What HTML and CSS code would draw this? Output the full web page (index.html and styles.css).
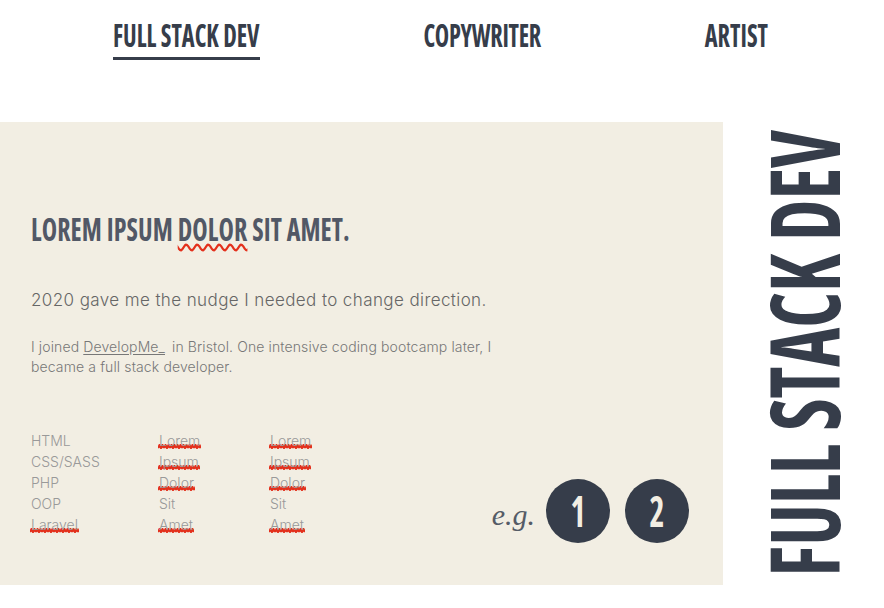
FILE: index.html
```html
<!DOCTYPE html>
<html lang="en">
<head>
<meta charset="utf-8">
<title>Full Stack Dev</title>
<link rel="stylesheet" href="styles.css">
</head>
<body>
<header class="nav">
  <a class="nav-link active" href="#"><span class="bebas">FULL STACK DEV</span></a>
  <a class="nav-link" href="#"><span class="bebas">COPYWRITER</span></a>
  <a class="nav-link" href="#"><span class="bebas">ARTIST</span></a>
</header>
<main class="layout">
  <section class="panel">
    <h1 class="title"><span class="bebas">LOREM IPSUM <span class="typo">DOLOR</span> SIT AMET.</span></h1>
    <p class="lead">2020 gave me the nudge I needed to change direction.</p>
    <p class="body">I joined <a class="link" href="#">DevelopMe_</a> in Bristol. One intensive coding bootcamp later, I became a full stack developer.</p>
    <div class="bottom">
      <div class="skills">
        <span>HTML</span><span class="typo">Lorem</span><span class="typo">Lorem</span>
        <span>CSS/SASS</span><span class="typo">Ipsum</span><span class="typo">Ipsum</span>
        <span>PHP</span><span class="typo">Dolor</span><span class="typo">Dolor</span>
        <span>OOP</span><span>Sit</span><span>Sit</span>
        <span class="typo">Laravel</span><span class="typo">Amet</span><span class="typo">Amet</span>
      </div>
      <div class="examples">
        <span class="eg">e.g.</span>
        <a class="circle" href="#"><span class="bebas">1</span></a>
        <a class="circle" href="#"><span class="bebas">2</span></a>
      </div>
    </div>
  </section>
  <aside class="side"><span class="vertical">FULL STACK DEV</span></aside>
</main>
</body>
</html>
```
FILE: styles.css
```css
* { box-sizing: border-box; }
body {
  margin: 0;
  background: #ffffff;
  font-family: "Inter", "Liberation Sans", sans-serif;
  color: #666;
}
.bebas {
  display: inline-block;
  font-family: "Open Sans", "Liberation Sans", sans-serif;
  font-stretch: 75%;
  font-weight: 700;
  transform: scaleY(1.33);
}
.nav {
  height: 122px;
  display: flex;
  justify-content: space-between;
  align-items: flex-start;
  padding: 0 116px 0 113px;
}
.nav-link {
  display: block;
  padding-top: 23px;
  padding-bottom: 10px;
  font-size: 24.3px;
  line-height: 24px;
  color: #363d4a;
  text-decoration: none;
  border-bottom: 3px solid transparent;
}
.nav-link:nth-child(2) { letter-spacing: -0.3px; }
.nav-link.active { border-bottom-color: #363d4a; }
.layout {
  display: flex;
  height: 463px;
}
.panel {
  width: 723px;
  flex: none;
  background: #f2eee3;
  padding: 0 34px 40px 31px;
  display: flex;
  flex-direction: column;
}
.title {
  margin: 94px 0 0;
  font-size: 26px;
  line-height: 24px;
  font-weight: 700;
  letter-spacing: 0.1px;
  color: #525866;
}
.title .bebas { transform: scaleY(1.26); }
.title .typo {
  text-decoration: underline wavy #e3301c;
  text-decoration-thickness: 1.8px;
  text-underline-offset: 2px;
}
.lead {
  margin: 47px 0 0;
  font-size: 17px;
  line-height: 24px;
  font-weight: 300;
  letter-spacing: 0.4px;
  color: #666;
}
.body {
  margin: 25px 0 0;
  max-width: 470px;
  font-size: 14px;
  line-height: 20px;
  font-weight: 300;
  letter-spacing: 0.12px;
  color: #777;
}
.link {
  color: inherit;
  text-decoration: underline;
  text-underline-offset: 2px;
  margin-right: 3px;
}
.bottom {
  margin-top: 53px;
  display: flex;
  justify-content: space-between;
  align-items: flex-end;
}
.skills {
  display: grid;
  grid-template-columns: 128px 111px auto;
  justify-items: start;
  font-size: 14px;
  line-height: 21px;
  font-weight: 300;
  color: #999;
  margin-bottom: 9px;
}
.skills .typo {
  padding: 0 1px;
  margin-left: -1px;
  background-image: url("data:image/svg+xml,%3Csvg xmlns='http://www.w3.org/2000/svg' width='6' height='5'%3E%3Cpath d='M0 4 L1.5 1.2 L3 4 L4.5 1.2 L6 4' fill='none' stroke='%23e3301c' stroke-width='2.2'/%3E%3C/svg%3E");
  background-repeat: repeat-x;
  background-position: 0 14px;
  background-size: 6px 5px;
}
.examples {
  display: flex;
  align-items: center;
  gap: 15px;
  margin-bottom: 1px;
}
.eg {
  font-family: "Liberation Serif", serif;
  font-style: italic;
  font-size: 30px;
  color: #555b66;
  margin-right: -4px;
  margin-top: 8px;
}
.circle {
  width: 64px;
  height: 64px;
  border-radius: 50%;
  background: #363d4a;
  color: #f2eee3;
  display: flex;
  align-items: center;
  justify-content: center;
  text-decoration: none;
  font-size: 32px;
  line-height: 32px;
}
.side {
  flex: 1;
  display: flex;
  align-items: center;
  justify-content: center;
}
.vertical {
  writing-mode: vertical-rl;
  transform: rotate(180deg) scaleX(1.3);
  font-family: "Open Sans", "Liberation Sans", sans-serif;
  font-stretch: 75%;
  font-weight: 700;
  font-size: 74px;
  line-height: 74px;
  color: #363d4a;
}
```
